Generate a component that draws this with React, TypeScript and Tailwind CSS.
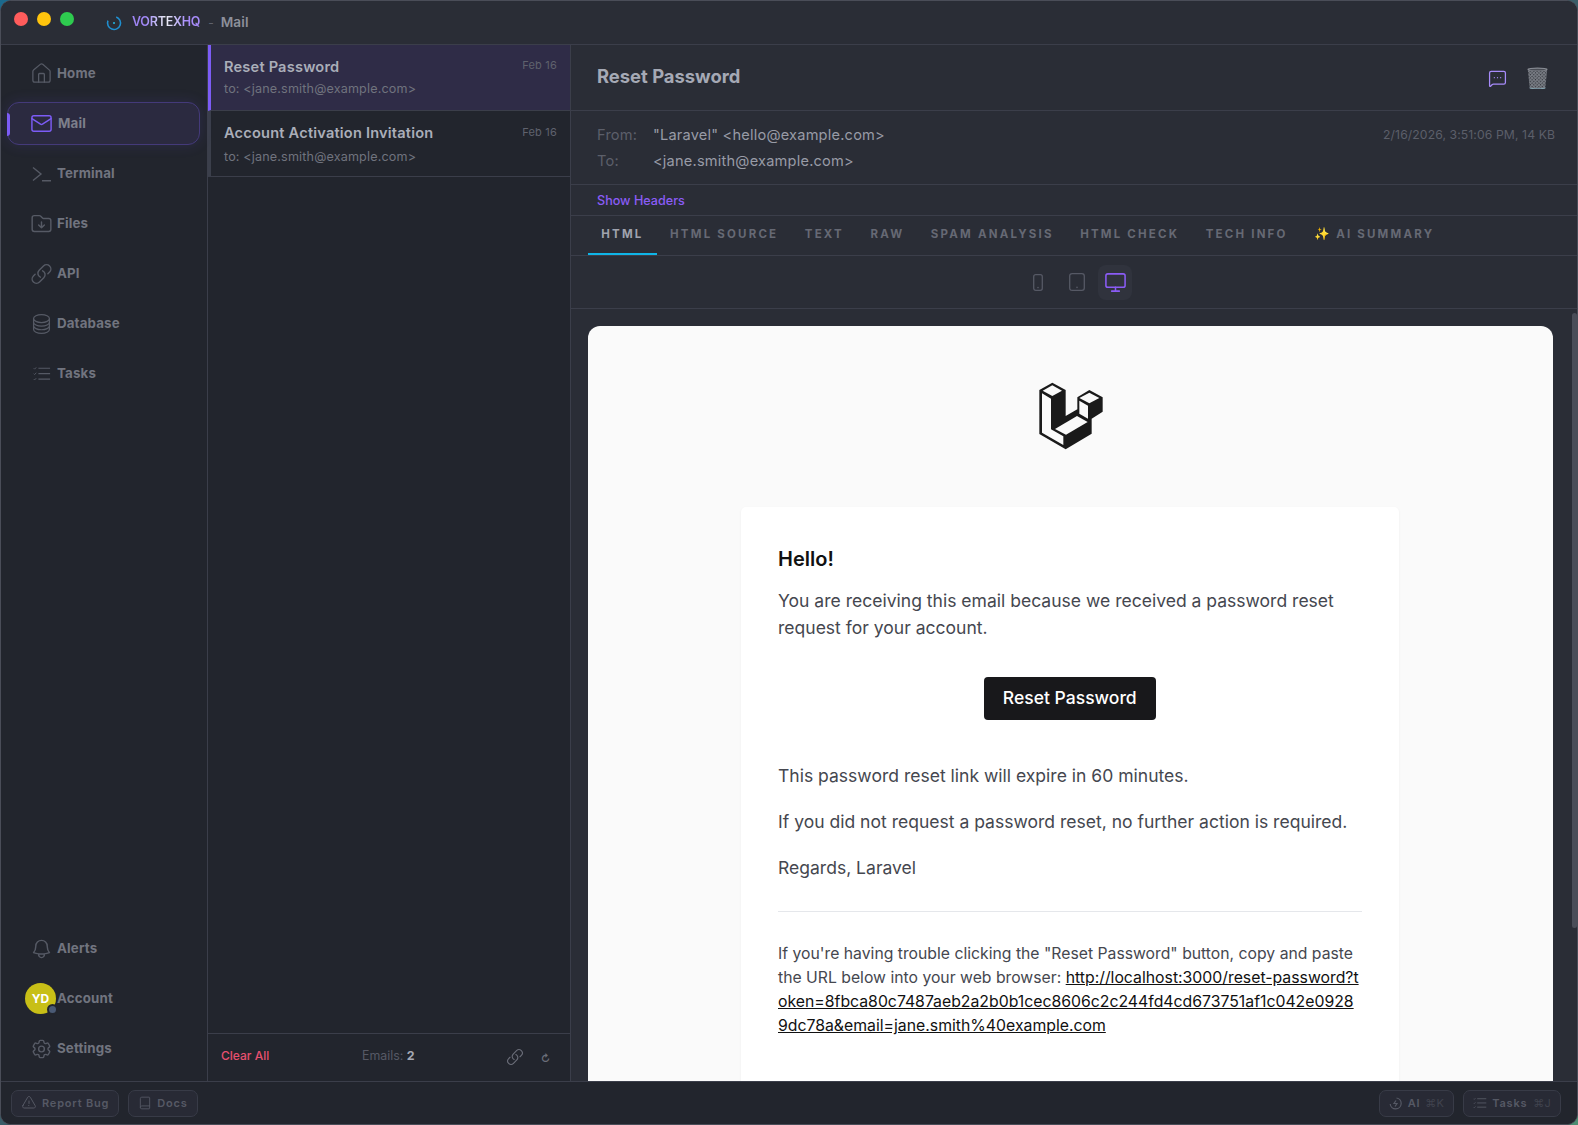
import React from "react";
import { House, Mail, Book, MessageSquareMore, Monitor } from "lucide-react";
import {
  HiOutlineFolderArrowDown,
  HiOutlineLink,
  HiOutlineExclamationTriangle,
  HiOutlineCog6Tooth,
  HiOutlineBell,
  HiOutlineCircleStack,
} from "react-icons/hi2";

const UI = "font-['Inter','Liberation_Sans',sans-serif]";

function TermIcon() {
  return (
    <svg width="20" height="16" viewBox="0 0 20 16" fill="none" stroke="currentColor" strokeWidth="1.4">
      <path d="M1 1.5 9 8l-8 6.5" />
      <path d="M10 14.8h9" />
    </svg>
  );
}

function TasksIcon({ size = 18 }: { size?: number }) {
  return (
    <svg width={size} height={size * 0.85} viewBox="0 0 20 17" fill="none" stroke="currentColor" strokeWidth="1.3">
      <path d="M6 2.5h13M6 8.5h13M6 14.5h13" />
      <path d="M.8 2.5l1 1 1.8-2M.8 8.5l1 1 1.8-2M.8 14.5l1 1 1.8-2" strokeWidth="1" />
    </svg>
  );
}

function NavItem({
  icon,
  label,
  active,
}: {
  icon: React.ReactNode;
  label: string;
  active?: boolean;
}) {
  return (
    <div
      className={
        "relative flex h-[43px] items-center rounded-[12px] border " +
        (active
          ? "border-[#443a7a] bg-[#2b2a40] shadow-[0_0_14px_rgba(100,80,220,0.16)]"
          : "border-transparent")
      }
    >
      {active && <span className="absolute -left-px top-[10px] h-[23px] w-[3px] rounded-r-sm bg-[#7c5cf6]" />}
      <span
        className={
          "ml-[22px] flex w-[23px] items-center justify-center " + (active ? "text-[#7c5cf6]" : "text-[#565a65]")
        }
      >
        {icon}
      </span>
      <span
        className={
          "text-[13.3px] font-bold tracking-[0.15px] " +
          (active ? "ml-[5px] text-[#7d7f8b]" : "ml-[4px] text-[#71747f]")
        }
      >
        {label}
      </span>
    </div>
  );
}

function ListRow({ title, active }: { title: string; active?: boolean }) {
  return (
    <div
      className={
        "flex h-[66px] flex-col border-b border-b-[#3b3e4a] border-l-[3px] pl-[13px] pr-[13px] " +
        (active ? "border-l-[#7c5cf6] bg-[#2f2c47]" : "border-l-[#3b3f4b] bg-[#22252d]")
      }
    >
      <div className="mt-[11px] flex items-start justify-between">
        <span className="text-[14.6px] font-semibold leading-[22px] tracking-[0.2px] text-[#aaaeb9]">{title}</span>
        <span className={(active ? "mt-[1px]" : "mt-[2px]") + " text-[11px] leading-[16px] tracking-[0.2px] text-[#5f626d]"}>
          Feb 16
        </span>
      </div>
      <span
        className={
          (active ? "mt-[1px]" : "mt-[3px]") + " text-[12.6px] leading-[20px] tracking-[0.15px] text-[#70737e]"
        }
      >
        to: &lt;jane.smith@example.com&gt;
      </span>
    </div>
  );
}

function Tab({ label, active, emoji }: { label: string; active?: boolean; emoji?: boolean }) {
  return (
    <div
      className={
        "flex h-full items-center whitespace-pre border-b-[2px] px-[13.25px] text-[11.5px] font-bold tracking-[2.2px] " +
        (active ? "border-[#0fb5e8] text-[#a0a3ae]" : "border-transparent text-[#666974]")
      }
    >
      {emoji && <span className="mr-[6px] text-[12.5px] tracking-normal">✨</span>}
      {label}
    </div>
  );
}

function TrashCan() {
  return (
    <svg width="21" height="22" viewBox="0 0 21 22">
      <defs>
        <pattern id="mesh" width="2.4" height="2.4" patternUnits="userSpaceOnUse" patternTransform="rotate(45)">
          <rect width="2.4" height="2.4" fill="#787c84" />
          <rect width="1.2" height="1.2" fill="#33363d" />
        </pattern>
      </defs>
      <path d="M.8 2.5h19.4l-2 19h-15.4z" fill="url(#mesh)" />
      <ellipse cx="10.5" cy="2.2" rx="10.2" ry="1.7" fill="#868a92" />
      <ellipse cx="10.5" cy="2.6" rx="8.6" ry="0.9" fill="#4a4d55" />
      <path d="M2.6 20.3c2 1.3 13.8 1.3 15.8 0l-.2 1.2c-2 .9-13.4.9-15.4 0z" fill="#84a3b0" />
    </svg>
  );
}

function LaravelLogo() {
  return (
    <svg width="66" height="68" viewBox="116 66 194 204">
      <path
        d="M157 68l40 22v78l35-20v-36l36-22 40 22v43l-33 21v45l-78 47-79-46V90z"
        fill="#1a1a1a"
      />
      <g fill="#fafafa">
        <path d="M157 76l29 16-29 16-29-16z" />
        <path d="M126 100l27 16v92l37 21v26l-64-37z" />
        <path d="M165 207l66-39 32 18-65 38z" />
        <path d="M268 98l30 16-30 16-30-16z" />
        <path d="M238 122l26 15v39l-26-15z" />
      </g>
    </svg>
  );
}

function Pill({ children }: { children: React.ReactNode }) {
  return (
    <div className="flex h-[27px] items-center rounded-[7px] border border-[#383b47] bg-[#282a35] px-[9px] text-[11px] font-semibold tracking-[0.8px] text-[#565965]">
      {children}
    </div>
  );
}

export default function App() {
  return (
    <div className={"h-[1125px] w-[1578px] overflow-hidden bg-linear-to-br from-[#1b6a8e] via-[#3a5d68] to-[#4d8d72] " + UI}>
      <div className="flex h-full flex-col overflow-hidden rounded-[11px] border border-[#4a4d58] bg-[#22252d]">
        {/* Title bar */}
        <div className="flex h-[44px] shrink-0 items-center border-b border-[#3b3e4a] bg-[#2a2d36]">
          <div className="mb-[8px] ml-[13px] flex gap-[9px]">
            <span className="h-[14px] w-[14px] rounded-full bg-[#ff5c5c]" />
            <span className="h-[14px] w-[14px] rounded-full bg-[#ffc40d]" />
            <span className="h-[14px] w-[14px] rounded-full bg-[#2ecb4f]" />
          </div>
          <svg className="ml-[32px]" width="16" height="16" viewBox="0 0 16 16" fill="none">
            <circle cx="8" cy="8" r="6.5" stroke="#1f8fd0" strokeWidth="1.6" strokeDasharray="30 11" transform="rotate(-70 8 8)" />
            <circle cx="8" cy="8" r="1" fill="#22b8e8" />
          </svg>
          <span className="ml-[10px] bg-linear-to-r from-[#9f85f5] from-20% via-[#eceef2] via-50% to-[#a78bfa] to-80% bg-clip-text text-[12.5px] font-semibold tracking-[-0.25px] text-transparent">
            VORTEXHQ
          </span>
          <span className="ml-[8px] text-[12px] text-[#5f626d]">-</span>
          <span className="ml-[7px] text-[13.6px] font-semibold tracking-[0.1px] text-[#8d909b]">Mail</span>
        </div>

        {/* Body */}
        <div className="flex min-h-0 flex-1">
          {/* Sidebar */}
          <div className="flex w-[207px] shrink-0 flex-col justify-between border-r border-[#3b3e4a] bg-[#22252d] pb-[11px] pl-[6px] pr-[7px] pt-[7px]">
            <div className="flex flex-col gap-[7px]">
              <NavItem icon={<House size={25} strokeWidth={1.35} />} label="Home" />
              <NavItem icon={<Mail size={27} strokeWidth={1.5} />} label="Mail" active />
              <NavItem icon={<TermIcon />} label="Terminal" />
              <NavItem icon={<HiOutlineFolderArrowDown size={25} />} label="Files" />
              <NavItem icon={<HiOutlineLink size={24} />} label="API" />
              <NavItem icon={<HiOutlineCircleStack size={28} strokeWidth={1.3} />} label="Database" />
              <NavItem icon={<TasksIcon />} label="Tasks" />
            </div>
            <div className="flex flex-col gap-[7px]">
              <NavItem icon={<HiOutlineBell size={24} />} label="Alerts" />
              <div className="relative flex h-[43px] items-center">
                <div className="relative ml-[18px] flex h-[31px] w-[31px] items-center justify-center rounded-full bg-[#c8bf17] text-[12px] font-bold text-white">
                  YD
                  <span className="absolute bottom-[-1px] right-[-2px] box-content h-[7px] w-[7px] rounded-full border-[2px] border-[#22252d] bg-[#4a5a75]" />
                </div>
                <span className="ml-[1px] text-[13.3px] font-bold tracking-[0.15px] text-[#71747f]">Account</span>
              </div>
              <NavItem icon={<HiOutlineCog6Tooth size={24} />} label="Settings" />
            </div>
          </div>

          {/* List */}
          <div className="flex w-[363px] shrink-0 flex-col border-r border-[#3b3e4a] bg-[#22252d]">
            <ListRow title="Reset Password" active />
            <ListRow title="Account Activation Invitation" />
            <div className="flex-1" />
            <div className="flex h-[48px] items-center border-t border-[#3b3e4a] pb-[3px] pl-[13px]">
              <span className="w-[141px] text-[12px] font-medium text-[#e8506f]">Clear All</span>
              <span className="mt-[1px] text-[12.4px] text-[#565965]">
                Emails: <b className="font-bold text-[#a5a8b3]">2</b>
              </span>
              <span className="ml-[91px] mt-[1px] text-[#6b6e79]">
                <HiOutlineLink size={18} />
              </span>
              <span className="ml-[17px] mt-[3px] text-[10px] font-bold leading-none text-[#6b6e79]">↻</span>
            </div>
          </div>

          {/* Detail */}
          <div className="relative flex min-w-0 flex-1 flex-col bg-[#2a2d36]">
            <div className="flex h-[66px] shrink-0 items-center justify-between border-b border-[#3b3e4a] pl-[26px] pr-[29px]">
              <span className="-mt-[2px] text-[18.4px] font-bold text-[#a5a9b5]">Reset Password</span>
              <div className="flex items-center gap-[20px]">
                <span className="mt-[2px] text-[#a78bfa]">
                  <MessageSquareMore size={19} strokeWidth={1.6} />
                </span>
                <TrashCan />
              </div>
            </div>
            <div className="flex h-[74px] shrink-0 justify-between border-b border-[#3b3e4a] pl-[26px] pr-[22px] pt-[14px]">
              <div className="flex flex-col gap-[6px] text-[14.6px] leading-[20px] tracking-[0.2px]">
                <div className="flex">
                  <span className="w-[56px] text-[#5c5f6a]">From:</span>
                  <span className="text-[#989ba6]">"Laravel" &lt;hello@example.com&gt;</span>
                </div>
                <div className="flex">
                  <span className="w-[56px] text-[#5c5f6a]">To:</span>
                  <span className="text-[#989ba6]">&lt;jane.smith@example.com&gt;</span>
                </div>
              </div>
              <span className="mt-[2px] text-[12.2px] leading-[16px] tracking-[0.1px] text-[#5c5f6a]">
                2/16/2026, 3:51:06 PM, 14 KB
              </span>
            </div>
            <div className="flex h-[31px] shrink-0 items-center border-b border-[#3b3e4a] pl-[26px] pt-[2px] text-[12.6px] font-medium text-[#8b5cf6]">
              Show Headers
            </div>
            <div className="flex h-[40px] shrink-0 items-stretch border-b border-[#3b3e4a] pl-[17px]">
              <Tab label="HTML" active />
              <Tab label="HTML SOURCE" />
              <Tab label="TEXT" />
              <Tab label="RAW" />
              <Tab label="SPAM ANALYSIS" />
              <Tab label="HTML CHECK" />
              <Tab label="TECH INFO" />
              <Tab label="AI SUMMARY" emoji />
            </div>
            <div className="flex h-[53px] shrink-0 items-center justify-center gap-[4px] border-b border-[#3b3e4a] pl-[4px]">
              <span className="flex h-[35px] w-[35px] items-center justify-center text-[#565965]">
                <svg width="10" height="17" viewBox="0 0 10 17" fill="none" stroke="currentColor" strokeWidth="1.3">
                  <rect x=".7" y=".7" width="8.6" height="15.6" rx="2" />
                  <circle cx="5" cy="13.6" r=".8" fill="currentColor" stroke="none" />
                </svg>
              </span>
              <span className="flex h-[35px] w-[35px] items-center justify-center text-[#565965]">
                <svg width="16" height="18" viewBox="0 0 16 18" fill="none" stroke="currentColor" strokeWidth="1.3">
                  <rect x=".7" y=".7" width="14.6" height="16.6" rx="2.4" />
                  <circle cx="8" cy="14.4" r=".8" fill="currentColor" stroke="none" />
                </svg>
              </span>
              <span className="flex h-[35px] w-[34px] items-center justify-center rounded-[8px] bg-[#30333d] text-[#8b5cf6]">
                <Monitor size={23} strokeWidth={1.6} />
              </span>
            </div>

            {/* Content */}
            <div className="relative min-h-0 flex-1 overflow-hidden px-[17px] pt-[17px]">
              <span className="absolute right-0 top-[4px] h-[615px] w-[5px] rounded-full bg-[#4a4d58]" />
              <div className="h-[900px] w-[965px] rounded-[12px] bg-[#fafafa] font-['Inter',sans-serif]">
                <div className="flex h-[181px] items-start justify-center pt-[56px]">
                  <LaravelLogo />
                </div>
                <div className="ml-[152.5px] w-[658px] rounded-[5px] bg-white pb-[60px] pl-[37.5px] pr-[37px] pt-[38px] shadow-[0_1px_3px_rgba(0,0,0,0.05)]">
                  <h1 className="text-[20px] font-semibold leading-[28px] text-[#111111]">Hello!</h1>
                  <p className="mt-[15px] text-[17.55px] leading-[26.6px] text-[#45474f]">
                    You are receiving this email because we received a password reset request for your account.
                  </p>
                  <div className="mt-[35.6px] flex justify-center">
                    <span className="flex h-[43px] w-[172px] items-center justify-center rounded-[4px] bg-[#18181b] text-[17.55px] font-medium text-white">
                      Reset Password
                    </span>
                  </div>
                  <p className="mt-[43px] text-[17.55px] leading-[26.4px] text-[#45474f]">
                    This password reset link will expire in 60 minutes.
                  </p>
                  <p className="mt-[19.5px] text-[17.55px] leading-[26.4px] text-[#45474f]">
                    If you did not request a password reset, no further action is required.
                  </p>
                  <p className="mt-[19.5px] text-[17.55px] leading-[26.4px] text-[#45474f]">Regards, Laravel</p>
                  <div className="mt-[30px] border-t border-[#e5e7eb]" />
                  <p className="mt-[30px] whitespace-nowrap text-[15.75px] leading-[24px] text-[#45474f]">
                    If you're having trouble clicking the "Reset Password" button, copy and paste
                    <br />
                    the URL below into your web browser:{" "}
                    <span className="text-[15.8px] text-[#111111] underline">
                      http://localhost:3000/reset-password?t
                      <br />
                      oken=8fbca80c7487aeb2a2b0b1cec8606c2c244fd4cd673751af1c042e0928
                      <br />
                      9dc78a&amp;email=jane.smith%40example.com
                    </span>
                  </p>
                </div>
              </div>
            </div>
          </div>
        </div>

        {/* Footer */}
        <div className="flex h-[43px] shrink-0 items-center justify-between border-t border-[#3b3e4a] bg-[#22252d] pl-[10px] pr-[16px]">
          <div className="flex gap-[9px]">
            <Pill>
              <HiOutlineExclamationTriangle size={16} className="mr-[5px]" />
              Report Bug
            </Pill>
            <Pill>
              <Book size={14} strokeWidth={1.5} className="mr-[5px]" />
              Docs
            </Pill>
          </div>
          <div className="flex gap-[9px]">
            <Pill>
              <svg className="mr-[6px]" width="13" height="13" viewBox="0 0 13 13" fill="none" stroke="currentColor" strokeWidth="1.2">
                <path d="M7.5 1a5.5 5.5 0 1 1-6.3 6" />
                <path d="M7 3.5 5 6.5h3l-2 3" />
              </svg>
              AI
              <span className="ml-[5px] font-normal tracking-[0.2px] text-[#40434e]">⌘K</span>
            </Pill>
            <Pill>
              <span className="mr-[5px]">
                <TasksIcon size={14} />
              </span>
              Tasks
              <span className="ml-[6px] font-normal tracking-[0.2px] text-[#40434e]">⌘J</span>
            </Pill>
          </div>
        </div>
      </div>
    </div>
  );
}
